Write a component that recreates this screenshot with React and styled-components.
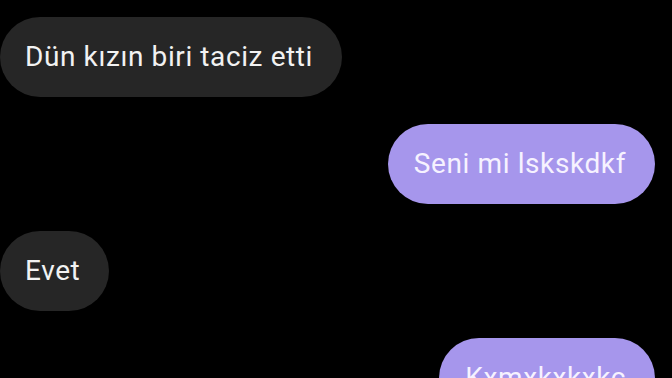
import React from 'react';
import styled, { createGlobalStyle } from 'styled-components';

const Global = createGlobalStyle`
  html, body {
    margin: 0;
    padding: 0;
    background: #000;
    overflow: hidden;
  }
`;

const Chat = styled.main`
  width: 672px;
  height: 378px;
  background: #000;
  display: flex;
  flex-direction: column;
  gap: 27px;
  padding: 17px 17px 0 0;
  box-sizing: border-box;
  overflow: hidden;
  font-family: Roboto, "Noto Sans", sans-serif;
`;

const Bubble = styled.div`
  align-self: ${p => (p.$mine ? 'flex-end' : 'flex-start')};
  height: 80px;
  box-sizing: border-box;
  display: flex;
  align-items: center;
  padding: 0 29px 2px ${p => (p.$mine ? '26px' : '25px')};
  border-radius: 40px;
  background: ${p => (p.$mine ? '#a696ec' : '#262626')};
  color: ${p => (p.$mine ? '#f6f2ff' : '#f2f2f2')};
  font-size: 28px;
  letter-spacing: 0.6px;
  white-space: nowrap;
  flex-shrink: 0;
`;

const messages = [
  { text: 'Dün kızın biri taciz etti', mine: false },
  { text: 'Seni mi lskskdkf', mine: true },
  { text: 'Evet', mine: false },
  { text: 'Kxmxkxkxkc', mine: true },
];

export default function App() {
  return (
    <>
      <Global />
      <Chat>
        {messages.map((m, i) => (
          <Bubble key={i} $mine={m.mine}>{m.text}</Bubble>
        ))}
      </Chat>
    </>
  );
}
